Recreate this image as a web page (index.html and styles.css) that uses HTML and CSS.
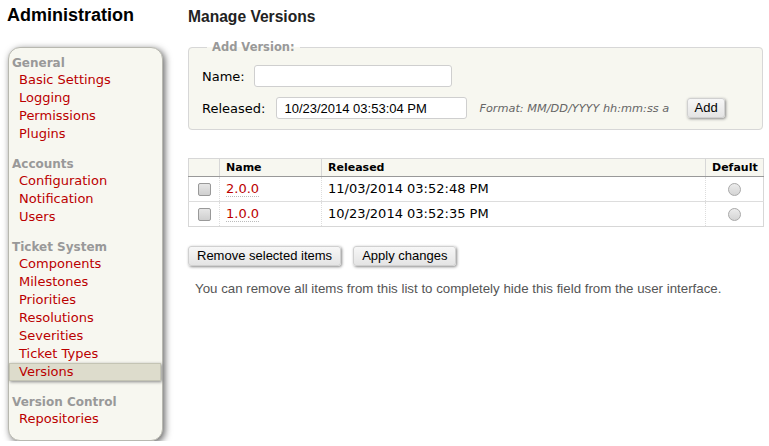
FILE: index.html
```html
<!DOCTYPE html>
<html>
<head>
<meta charset="utf-8">
<title>Manage Versions</title>
<link rel="stylesheet" href="styles.css">
</head>
<body>
<div class="page">
  <div class="side">
    <h1 class="title">Administration</h1>
    <nav class="tabs">
      <div class="group">
        <div class="ghead">General</div>
        <a class="item" href="#">Basic Settings</a>
        <a class="item" href="#">Logging</a>
        <a class="item" href="#">Permissions</a>
        <a class="item" href="#">Plugins</a>
      </div>
      <div class="group">
        <div class="ghead">Accounts</div>
        <a class="item" href="#">Configuration</a>
        <a class="item" href="#">Notification</a>
        <a class="item" href="#">Users</a>
      </div>
      <div class="group">
        <div class="ghead">Ticket System</div>
        <a class="item" href="#">Components</a>
        <a class="item" href="#">Milestones</a>
        <a class="item" href="#">Priorities</a>
        <a class="item" href="#">Resolutions</a>
        <a class="item" href="#">Severities</a>
        <a class="item" href="#">Ticket Types</a>
        <a class="item active" href="#">Versions</a>
      </div>
      <div class="group">
        <div class="ghead">Version Control</div>
        <a class="item" href="#">Repositories</a>
      </div>
    </nav>
  </div>
  <main class="main">
    <h2 class="heading">Manage Versions</h2>
    <form class="addform">
      <fieldset class="box">
        <legend class="legend">Add Version:</legend>
        <div class="row">
          <label class="lbl">Name:</label>
          <input class="txt name-in" type="text">
        </div>
        <div class="row row2">
          <label class="lbl">Released:</label>
          <input class="txt date-in" type="text" value="10/23/2014 03:53:04 PM">
          <span class="hint">Format: MM/DD/YYYY hh:mm:ss a</span>
          <button class="btn add" type="button">Add</button>
        </div>
      </fieldset>
    </form>
    <table class="listing">
      <colgroup>
        <col class="c-sel"><col class="c-name"><col class="c-rel"><col class="c-def">
      </colgroup>
      <thead>
        <tr><th class="sel"></th><th>Name</th><th>Released</th><th class="def">Default</th></tr>
      </thead>
      <tbody>
        <tr>
          <td class="sel"><input class="chk" type="checkbox"></td>
          <td><a class="vlink" href="#">2.0.0</a></td>
          <td>11/03/2014 03:52:48 PM</td>
          <td class="def"><input class="rad" type="radio" name="def"></td>
        </tr>
        <tr>
          <td class="sel"><input class="chk" type="checkbox"></td>
          <td><a class="vlink" href="#">1.0.0</a></td>
          <td>10/23/2014 03:52:35 PM</td>
          <td class="def"><input class="rad" type="radio" name="def"></td>
        </tr>
      </tbody>
    </table>
    <div class="buttons">
      <button class="btn" type="button">Remove selected items</button>
      <button class="btn" type="button">Apply changes</button>
    </div>
    <p class="help">You can remove all items from this list to completely hide this field from the user interface.</p>
  </main>
</div>
</body>
</html>
```
FILE: styles.css
```css
html, body {
  margin: 0;
  padding: 0;
  background: #fff;
}
body {
  font-family: "DejaVu Sans", Verdana, sans-serif;
  font-size: 13px;
  color: #000;
}
.page {
  display: flex;
  align-items: flex-start;
}
.side {
  width: 163px;
  padding-left: 8px;
  flex: none;
}
.title {
  font-family: "Liberation Sans", Arial, sans-serif;
  font-size: 18px;
  line-height: 22px;
  font-weight: bold;
  margin: 4px 0 0 -1px;
}
.tabs {
  margin-top: 21px;
  width: 155px;
  box-sizing: border-box;
  background: #f7f7f0;
  border: 1px solid #b8b8b0;
  border-radius: 12px;
  box-shadow: 2px 2px 7px 0 #666;
  padding: 7px 0 12px;
}
.group {
  display: flex;
  flex-direction: column;
}
.group + .group {
  margin-top: 13px;
}
.ghead {
  color: #999;
  font-weight: bold;
  font-size: 12px;
  line-height: 16px;
  padding-left: 3px;
}
.item {
  color: #b00;
  text-decoration: none;
  line-height: 18px;
  height: 18px;
  padding-left: 10px;
  box-sizing: border-box;
}
.item.active {
  background: #dddccc;
  border: 1px solid #c4c4b4;
  line-height: 16px;
  margin-right: 1px;
  padding-left: 9px;
  box-shadow: 1px 1px 3px 0 #888;
}
.main {
  flex: 1;
  margin-left: 17px;
  padding-right: 6px;
  min-width: 0;
}
.heading {
  font-family: "Liberation Sans", Arial, sans-serif;
  font-size: 15.6px;
  line-height: 18px;
  font-weight: bold;
  color: #222;
  margin: 8px 0 0;
}
.addform {
  margin: 14px 0 0;
}
.box {
  margin: 0;
  background: #f7f7f0;
  border: 1px solid #d7d7d7;
  border-radius: 4px;
  padding: 11px 13px 10px;
  display: flex;
  flex-direction: column;
  gap: 10px;
}
.legend {
  color: #999;
  font-weight: bold;
  font-size: 11.5px;
  line-height: 14px;
  padding: 0 5px;
  margin-left: 5px;
}
.row {
  display: flex;
  align-items: center;
  height: 22px;
}
.lbl {
  font-size: 13px;
  margin-right: 9px;
}
.row2 .lbl {
  margin-right: 11px;
}
.txt {
  font-family: "Liberation Sans", Arial, sans-serif;
  font-size: 13px;
  height: 22px;
  box-sizing: border-box;
  border: 1px solid #cfcfcf;
  border-radius: 3px;
  background: #fff;
  padding: 0 7px;
  color: #000;
  margin: 0;
}
.name-in {
  width: 198px;
}
.date-in {
  width: 191px;
}
.hint {
  font-style: italic;
  font-size: 11.3px;
  color: #666;
  margin-left: 12px;
}
.btn {
  font-family: "Liberation Sans", Arial, sans-serif;
  font-size: 13px;
  color: #000;
  height: 20px;
  line-height: 18px;
  box-sizing: border-box;
  padding: 0 8px;
  background: linear-gradient(#f7f7f7, #e4e4e4);
  border: 1px solid #d0d0d0;
  border-radius: 3px;
  box-shadow: 1px 1px 3px 0 #888;
  margin: 0;
}
.add {
  margin-left: 18px;
  width: 38px;
  padding: 0;
}
.listing {
  margin-top: 28px;
  width: 575px;
  border-collapse: collapse;
  border-spacing: 0;
  table-layout: fixed;
  border: 1px solid #d7d7d7;
}
.c-sel { width: 31px; }
.c-name { width: 102px; }
.c-rel { width: 384px; }
.c-def { width: 58px; }
.listing thead {
  background: #f7f7f0;
}
.listing th {
  font-size: 11px;
  font-weight: bold;
  text-align: left;
  line-height: 13px;
  padding: 2px 6px;
  border: 1px solid #d7d7d7;
  border-bottom-color: #999;
  white-space: nowrap;
}
.listing td {
  line-height: 16px;
  padding: 4px 6px;
  border: 1px dotted #ddd;
  border-top: 1px solid #ddd;
  vertical-align: middle;
  color: #000;
}
.listing .sel, .listing .def {
  text-align: center;
  padding: 0;
}
.listing th.def {
  padding: 2px 6px;
}
.vlink {
  color: #b00;
  text-decoration: none;
  border-bottom: 1px dotted #bbb;
}
.chk {
  appearance: none;
  -webkit-appearance: none;
  width: 13px;
  height: 13px;
  margin: 0;
  border: 1px solid #999;
  border-radius: 2px;
  background: linear-gradient(#e6e6e6, #cfcfcf);
  vertical-align: middle;
}
.rad {
  appearance: none;
  -webkit-appearance: none;
  width: 13px;
  height: 13px;
  margin: 0;
  border: 1px solid #aaa;
  border-radius: 50%;
  background: linear-gradient(#ececec, #d4d4d4);
  vertical-align: middle;
}
.buttons {
  margin-top: 19px;
  display: flex;
  gap: 12px;
}
.help {
  font-family: "Liberation Sans", Arial, sans-serif;
  font-size: 13.3px;
  line-height: 15px;
  color: #555;
  margin: 15px 0 0 7px;
}
```
